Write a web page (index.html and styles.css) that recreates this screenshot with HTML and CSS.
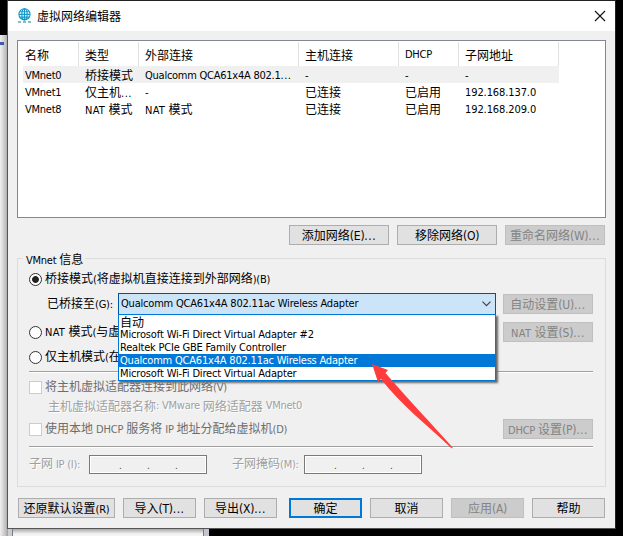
FILE: index.html
```html
<!DOCTYPE html>
<html lang="zh-CN">
<head>
<meta charset="utf-8">
<title>虚拟网络编辑器</title>
<link rel="stylesheet" href="styles.css">
</head>
<body>
<div class="behind-left"></div>
<div class="behind-bottom"></div>
<main class="window">
  <header class="titlebar">
    <svg class="globe" width="13" height="15" viewBox="0 0 13 15" fill="none" stroke="#1899c7" stroke-width="1.1"><circle cx="6.5" cy="6.3" r="5.6"/><ellipse cx="6.5" cy="6.3" rx="2.7" ry="5.6"/><path d="M6.5.7v11.2M1.6 3.7h9.8M1 6.4h11M1.6 9.1h9.8"/><path d="M0 14h3M5 14h3M10 14h3" stroke="#15806f"/></svg>
    <h1>虚拟网络编辑器</h1>
    <svg class="close" width="12" height="12" viewBox="0 0 12 12" stroke="#111" stroke-width="1.1"><path d="M1 1l10 10M11 1L1 11"/></svg>
  </header>

  <section class="list">
    <div class="row head"><span>名称</span><span>类型</span><span>外部连接</span><span>主机连接</span><span class="en">DHCP</span><span>子网地址</span></div>
    <div class="row current"><span class="en">VMnet0</span><span>桥接模式</span><span class="en">Qualcomm QCA61x4A 802.1<i class="dots">...</i></span><span class="en">-</span><span class="en">-</span><span class="en">-</span></div>
    <div class="row"><span class="en">VMnet1</span><span>仅主机<i class="en dots">...</i></span><span class="en">-</span><span>已连接</span><span>已启用</span><span class="en ip-text">192.168.137.0</span></div>
    <div class="row"><span class="en">VMnet8</span><span><i class="en nat-word">NAT </i>模式</span><span><i class="en nat-word">NAT </i>模式</span><span>已连接</span><span>已启用</span><span class="en ip-text">192.168.209.0</span></div>
  </section>

  <div class="list-actions">
    <button>添加网络<i class="en paren">(E)<i class="dots">...</i></i></button>
    <button>移除网络<i class="en paren">(O)</i></button>
    <button disabled>重命名网络<i class="en paren">(W)<i class="dots">...</i></i></button>
  </div>

  <section class="group">
    <h2><i class="en">VMnet </i>信息</h2>
    <div class="line bridged"><b class="radio on"></b><span>桥接模式<i class="en">(</i>将虚拟机直接连接到外部网络<i class="en">)(B)</i></span></div>
    <div class="line combo-line">
      <label>已桥接至<i class="en">(G):</i></label>
      <div class="combo"><span class="en long">Qualcomm QCA61x4A 802.11ac Wireless Adapter</span>
        <svg width="9" height="6" viewBox="0 0 9 6" fill="none" stroke="#444" stroke-width="1.2"><path d="M.5.7l4 4 4-4"/></svg>
        <ul class="menu">
          <li>自动</li>
          <li class="en wide">Microsoft Wi-Fi Direct Virtual Adapter #2</li>
          <li class="en long">Realtek PCIe GBE Family Controller</li>
          <li class="en long selected">Qualcomm QCA61x4A 802.11ac Wireless Adapter</li>
          <li class="en wide">Microsoft Wi-Fi Direct Virtual Adapter</li>
        </ul>
      </div>
      <button disabled>自动设置<i class="en paren">(U)<i class="dots">...</i></i></button>
    </div>
    <div class="line nat"><b class="radio"></b><span><i class="en nat-word">NAT </i>模式<i class="en">(</i>与虚</span><button disabled><i class="en nat-word">NAT </i>设置<i class="en paren">(S)<i class="dots">...</i></i></button></div>
    <div class="line host"><b class="radio"></b><span>仅主机模式<i class="en">(</i>在</span></div>
    <hr>
    <div class="line attach off"><b class="check"></b><span>将主机虚拟适配器连接到此网络<i class="en">(V)</i></span></div>
    <div class="line adapter">主机虚拟适配器名称<i class="en">: VMware </i>网络适配器<i class="en"> VMnet0</i></div>
    <div class="line dhcp off"><b class="check"></b><span>使用本地<i class="en wide"> DHCP </i>服务将<i class="en"> IP </i>地址分配给虚拟机<i class="en">(D)</i></span><button disabled><i class="en">DHCP </i>设置<i class="en paren">(P)<i class="dots">...</i></i></button></div>
    <hr class="second">
    <div class="line subnet">
      <label>子网<i class="en"> IP (I):</i></label><div class="ip"><i>.</i><i>.</i><i>.</i></div>
      <label class="mask">子网掩码<i class="en">(M):</i></label><div class="ip"><i>.</i><i>.</i><i>.</i></div>
    </div>
  </section>

  <footer>
    <button class="restore">还原默认设置<i class="en">(R)</i></button>
    <button>导入<i class="en paren">(T)<i class="dots">...</i></i></button>
    <button>导出<i class="en paren">(X)<i class="dots">...</i></i></button>
    <button class="primary">确定</button>
    <button>取消</button>
    <button disabled>应用<i class="en paren">(A)</i></button>
    <button>帮助</button>
  </footer>
</main>
<svg class="arrow" width="83" height="87" viewBox="0 0 83 87"><path d="M1 1L17 7 14.500 10C34 33 61 61 82 85Q80 86 77 82C55 61 30 42 10 16L7 19Z" fill="#ff3b3b"/></svg>
</body>
</html>
```

FILE: styles.css
```css
* { box-sizing: border-box; }
body {
  margin: 0; width: 623px; height: 536px; position: relative; overflow: hidden;
  background: #000; color: #000;
  font: 12px/16px "Noto Sans CJK SC", sans-serif; white-space: nowrap;
}
i { font-style: normal; }
.en { font-family: "DejaVu Sans Condensed", "DejaVu Sans", sans-serif; font-stretch: condensed; font-size: 11px; letter-spacing: -.25px; white-space: pre; }
.long { letter-spacing: -.2px; }
.wide { letter-spacing: -.15px; }
.nat-word { letter-spacing: .25px; }
.paren { font-size: 12px; }
.dots { letter-spacing: .5px; }
.ip-text { letter-spacing: -.1px; }
.behind-left {
  position: absolute; left: 0; top: 35px; width: 8px; height: 501px;
  background: linear-gradient(#4058b0, #4058b0) 0 7px / 4px 3px no-repeat, linear-gradient(90deg, #f0f0f0, #bdbdbd 6px, #999);
}
.behind-bottom {
  position: absolute; left: 8px; top: 528px; width: 201px; height: 8px;
  background: linear-gradient(#999, #f4f4f4 6px); border-left: 4px solid #ccc; border-right: 5px solid #c5c4cc;
}
.behind-bottom::before { content: ""; display: block; height: 8px; border: solid #777b86; border-width: 0 1px; }
.window {
  position: relative; margin-left: 7px; width: 609px; height: 529px; background: #f0f0f0;
  border: 1px solid #555; border-top-color: #222; border-right-color: #222;
}
.titlebar { height: 30px; background: #fff; display: flex; align-items: center; padding: 0 8px 0 10px; }
.globe { margin-top: -1px; }
h1 { font-size: 12px; font-weight: 400; margin: 0 auto 0 6px; }
.close { margin-right: 1px; }
.list { margin: 9px 0 0 9px; width: 589px; height: 178px; background: #fff; border: 1px solid #828790; padding: 1px 5px; }
.row { display: grid; grid-template-columns: 56px 60px 160px 100px 60px 100px; width: 536px; height: 17px; line-height: 17px; }
.row > span { height: 17px; padding-left: 6px; overflow: hidden; }
.row > .en { line-height: 19px; }
.row > span:first-child { padding-left: 2px; }
.head { height: 24px; line-height: 25px; }
.head > span { height: 24px; border-right: 1px solid #e0e0e0; }
.head > .en { line-height: 25px; }
.current { background: #f0f0f0; }
button {
  font: inherit; color: #000; padding: 0; height: 20px; width: 100px; line-height: 18px;
  background: #e1e1e1; border: 1px solid #adadad; border-radius: 0; text-align: center; white-space: nowrap;
}
button:disabled { background: #ccc; border-color: #bfbfbf; color: #838383; }
.list-actions { display: flex; justify-content: flex-end; gap: 8px; margin: 7px 10px 0 0; }
.group { margin: 13px 0 0 9px; width: 589px; height: 229px; border: 1px solid #dcdcdc; padding: 0 12px 0 11px; }
h2 { font-size: 12px; font-weight: 400; line-height: 16px; height: 16px; width: 62px; margin: -8px 0 0 -6px; padding-left: 3px; background: #f0f0f0; }
.line { display: flex; align-items: center; }
.line button { width: 90px; margin-left: auto; }
.radio { width: 13px; height: 13px; border: 1px solid #333; border-radius: 50%; background: #fff; margin-right: 3px; }
.radio.on { background: radial-gradient(circle, #222 3px, #fff 3.8px); }
.check { width: 13px; height: 13px; border: 1px solid #ccc; background: #fff; margin-right: 3px; }
.bridged { height: 20px; margin-top: 2px; }
.combo-line { height: 22px; margin-top: 4px; padding-left: 18px; }
.combo-line label { width: 71px; }
.combo {
  position: relative; width: 378px; height: 22px; background: #cce4f7; border: 1px solid #005499;
  display: flex; align-items: center; justify-content: space-between; padding: 0 4px 0 2px;
}
.menu {
  position: absolute; z-index: 2; left: -1px; top: 20px; width: 378px; height: 67px; margin: 0; padding: 0;
  list-style: none; background: #fff; border: 1px solid #0078d7; box-shadow: 2px 2px 2px #666;
}
.menu li { height: 13px; line-height: 14px; padding-left: 1px; }
.menu .selected { background: #0078d7; color: #fff; }
.nat { height: 20px; margin-top: 7px; }
.host { height: 20px; margin-top: 5px; }
hr { border: 0; height: 2px; margin: 4px 0 0; background: linear-gradient(#a0a0a0 50%, #fff 50%); }
.off { color: #6d6d6d; }
.attach { height: 18px; margin-top: 5px; }
.adapter { height: 18px; margin-top: 1px; padding-left: 19px; color: #9f9f9f; text-shadow: 1px 1px #fff; }
.dhcp { height: 20px; margin-top: 4px; }
hr.second { margin-top: 7px; }
.subnet { height: 20px; margin-top: 6px; color: #9f9f9f; }
.subnet label { width: 60px; text-shadow: 1px 1px #fff; }
.subnet .mask { margin-left: 25px; width: 72px; }
.ip { width: 118px; height: 19px; border: 1px solid #7a7a7a; box-shadow: inset 0 0 0 1px #fff; display: flex; gap: 25px; padding-left: 29px; color: #555; line-height: 18px; }
.ip i { width: 3px; font-size: 10px; }
footer { display: flex; margin: 11px 0 0 10px; gap: 8px; }
footer button { width: 73px; }
footer .restore { width: 97px; }
footer .primary { margin-left: 4px; border: 2px solid #0078d7; line-height: 16px; }
.arrow { position: absolute; z-index: 3; left: 371px; top: 363px; }
```
